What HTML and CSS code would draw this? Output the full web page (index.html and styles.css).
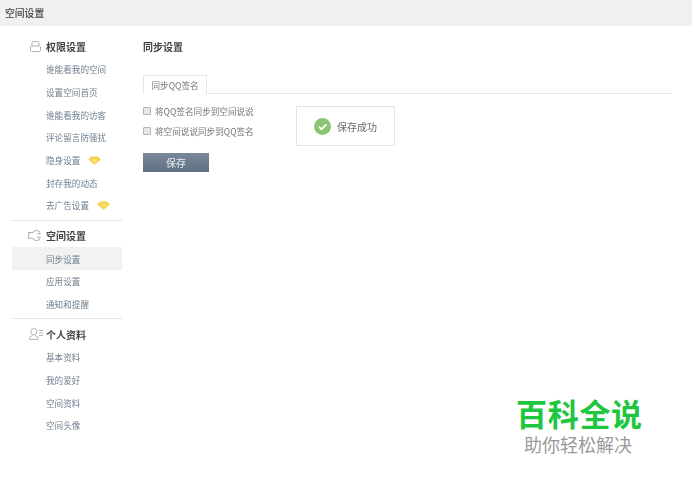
FILE: index.html
```html
<!DOCTYPE html>
<html lang="zh">
<head>
<meta charset="utf-8">
<title>空间设置</title>
<link rel="stylesheet" href="styles.css">
</head>
<body>
<header class="topbar">空间设置</header>
<div class="layout">
  <nav class="sidebar">
    <section class="group">
      <h3 class="group-title">
        <svg class="group-icon icon-lock" width="11" height="11" viewBox="0 0 11 11" fill="none" stroke="#b4b4b4" stroke-width="1"><path d="M2 5V1.6Q2 .5 3.1 .5H7.9Q9 .5 9 1.6V5"/><rect x=".5" y="5" width="10" height="5.5" rx="1"/></svg>
        权限设置
      </h3>
      <a class="item">谁能看我的空间</a>
      <a class="item">设置空间首页</a>
      <a class="item">谁能看我的访客</a>
      <a class="item">评论留言防骚扰</a>
      <a class="item">隐身设置<svg class="gem" width="13" height="9" viewBox="0 0 13 9"><path d="M3 .5H10L12.8 3.4 6.5 8.8 .2 3.4Z" fill="#f7d24a"/><path d="M3.5 3.4H9.5L6.5 6.4Z" fill="#fbe68f"/></svg></a>
      <a class="item">封存我的动态</a>
      <a class="item">去广告设置<svg class="gem" width="13" height="9" viewBox="0 0 13 9"><path d="M3 .5H10L12.8 3.4 6.5 8.8 .2 3.4Z" fill="#f7d24a"/><path d="M3.5 3.4H9.5L6.5 6.4Z" fill="#fbe68f"/></svg></a>
    </section>
    <section class="group">
      <h3 class="group-title">
        <svg class="group-icon icon-gear" width="13" height="11" viewBox="0 0 13 11" fill="none" stroke="#b4b4b4" stroke-width="1.1"><path d="M12 2.4Q10.8 .5 8.5 .5 7 .5 5.8 1.6L4.5 2.6H.6V8.2H4.5L5.8 9.4Q7 10.5 8.5 10.5 10.8 10.5 12 8.6"/><path d="M12.6 3.6H9.2M12.6 7.4H9.2"/></svg>
        空间设置
      </h3>
      <a class="item active">同步设置</a>
      <a class="item">应用设置</a>
      <a class="item">通知和提醒</a>
    </section>
    <section class="group">
      <h3 class="group-title">
        <svg class="group-icon icon-user" width="14" height="12" viewBox="0 0 14 12" fill="none" stroke="#b4b4b4" stroke-width="1"><circle cx="4.8" cy="3.6" r="3.1"/><path d="M3.4 6.6V7.6L.6 9.4V11.4H9V9.4L6.2 7.6V6.6"/><path d="M10 2.5H14M10 5H14M10 7.5H14"/></svg>
        个人资料
      </h3>
      <a class="item">基本资料</a>
      <a class="item">我的爱好</a>
      <a class="item">空间资料</a>
      <a class="item">空间头像</a>
    </section>
  </nav>
  <main class="content">
    <h2 class="page-title">同步设置</h2>
    <div class="tabs"><span class="tab">同步QQ签名</span></div>
    <div class="panel">
      <div class="options">
        <label class="option"><span class="check"></span>将QQ签名同步到空间说说</label>
        <label class="option"><span class="check"></span>将空间说说同步到QQ签名</label>
        <button class="save">保存</button>
      </div>
      <div class="toast">
        <svg width="17" height="17" viewBox="0 0 17 17"><circle cx="8.5" cy="8.5" r="8.5" fill="#8cc572"/><path d="M4.8 8.6 7.6 11.2 12.4 6.4" fill="none" stroke="#fff" stroke-width="1.8"/></svg>
        <span>保存成功</span>
      </div>
    </div>
  </main>
</div>
<div class="watermark">
  <div class="wm-title">百科全说</div>
  <div class="wm-sub">助你轻松解决</div>
</div>
</body>
</html>
```
FILE: styles.css
```css
* { box-sizing: border-box; }
html, body { margin: 0; height: 100%; }
body {
  position: relative;
  width: 692px;
  height: 489px;
  overflow: hidden;
  background: #fff;
  font-family: "Noto Sans CJK SC", "Liberation Sans", sans-serif;
  font-size: 8.6px;
  color: #6f7a85;
}
.topbar {
  height: 26px;
  padding-left: 5px;
  background: #f0f0f0;
  color: #444;
  font-size: 9.8px;
  font-weight: 500;
  line-height: 27px;
  filter: blur(0.3px);
}
.layout { display: flex; filter: blur(0.3px); }
.sidebar { width: 110px; margin-left: 12px; padding-top: 9px; flex: none; }
.group { padding-bottom: 3px; margin-bottom: 3.5px; border-bottom: 1px solid #e6e6e6; }
.group:last-child { border-bottom: 0; }
.group-title {
  position: relative;
  margin: 0;
  height: 23px;
  padding-left: 34px;
  color: #444;
  font-size: 10px;
  font-weight: 700;
  line-height: 23px;
}
.group-icon { position: absolute; }
.icon-lock { left: 18px; top: 6px; }
.icon-gear { left: 16px; top: 6px; }
.icon-user { left: 17px; top: 5px; }
.item {
  display: flex;
  align-items: center;
  height: 22.7px;
  padding-left: 34px;
  color: #6f7f8f;
}
.item.active { background: #f2f2f2; }
.gem { margin-left: 8px; }
.content { flex: 1; margin-left: 21px; margin-right: 21px; }
.page-title { margin: 14px 0 0; color: #444; font-size: 10px; font-weight: 700; line-height: 14px; }
.tabs { height: 19px; margin-top: 21px; border-bottom: 1px solid #e6e6e6; }
.tab {
  display: inline-block;
  height: 19px;
  padding: 0 7.5px;
  background: #fff;
  border: 1px solid #e6e6e6;
  border-bottom: 0;
  color: #777;
  line-height: 18px;
}
.panel { display: flex; padding-top: 7px; }
.options { width: 153px; }
.option {
  display: flex;
  align-items: center;
  height: 20px;
  color: #777;
}
.check {
  width: 8px;
  height: 8px;
  margin-right: 4px;
  background: #e8e8e8;
  border: 1px solid #b5b5b5;
  border-radius: 1px;
}
.save {
  display: block;
  width: 66px;
  height: 19px;
  margin-top: 12px;
  padding: 0;
  background: linear-gradient(#79899b, #5f7083);
  border: 0;
  color: #e8edf2;
  font: inherit;
  font-size: 10px;
}
.toast {
  display: flex;
  align-items: center;
  gap: 6px;
  width: 99px;
  height: 40px;
  margin-top: 5px;
  padding-left: 17px;
  background: #fff;
  border: 1px solid #e2e2e2;
  color: #6b6b6b;
  font-size: 10px;
}
.watermark {
  position: absolute;
  left: 516px;
  top: 398px;
  font-family: "Liberation Sans", "Noto Sans CJK SC", sans-serif;
}
.wm-title {
  color: #1fc63f;
  font-size: 31px;
  font-weight: 700;
  letter-spacing: 0.7px;
  line-height: 36px;
}
.wm-sub {
  margin: 1px 0 0 8px;
  color: #999;
  font-size: 18px;
  line-height: 22px;
}
```
